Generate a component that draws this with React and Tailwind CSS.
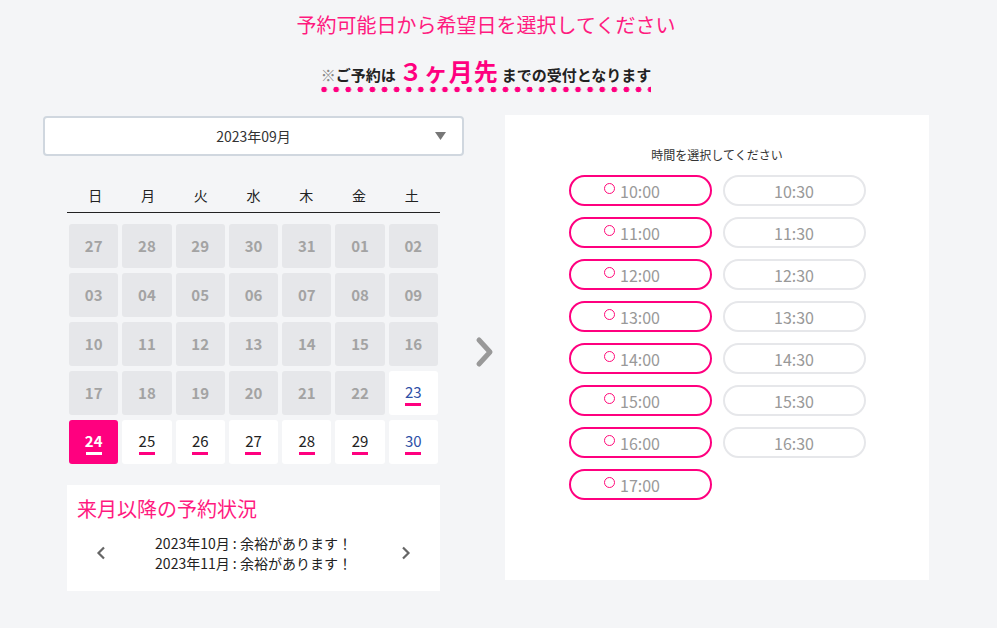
import React from "react";

const weeks = [
  ["27", "28", "29", "30", "31", "01", "02"],
  ["03", "04", "05", "06", "07", "08", "09"],
  ["10", "11", "12", "13", "14", "15", "16"],
  ["17", "18", "19", "20", "21", "22", "23"],
  ["24", "25", "26", "27", "28", "29", "30"],
];

const times = [
  ["10:00", "10:30"],
  ["11:00", "11:30"],
  ["12:00", "12:30"],
  ["13:00", "13:30"],
  ["14:00", "14:30"],
  ["15:00", "15:30"],
  ["16:00", "16:30"],
  ["17:00", null],
];

function DayCell({ day, row, col }) {
  // 9/23 以降が予約可能
  const open = row === 4 || (row === 3 && col === 6);
  const selected = row === 4 && col === 0;

  if (!open) {
    return (
      <div className="h-[44px] rounded-[3px] bg-[#e6e7ea] flex items-center justify-center text-[15px] font-bold text-[#a3a3a3]">
        {day}
      </div>
    );
  }
  if (selected) {
    return (
      <div className="h-[44px] rounded-[3px] bg-[#ff007f] flex flex-col items-center justify-center pt-[3px]">
        <span className="text-[15px] leading-[16px] font-bold text-white">{day}</span>
        <span className="mt-[3px] w-[16px] h-[3px] bg-white" />
      </div>
    );
  }
  return (
    <div className="h-[44px] rounded-[3px] bg-white flex flex-col items-center justify-center pt-[3px]">
      <span className={`text-[15px] leading-[16px] ${col === 6 ? "text-[#2d4fa6]" : "text-[#222]"}`}>{day}</span>
      <span className="mt-[3px] w-[16px] h-[3px] bg-[#ff007f]" />
    </div>
  );
}

function TimeButton({ time }) {
  if (!time) return <div />;
  const ok = time.endsWith(":00");
  return (
    <button
      className={`h-[31px] rounded-full border-2 flex items-center justify-center text-[16px] text-[#999] bg-white ${
        ok ? "border-[#ff007f]" : "border-[#e6e7ea]"
      }`}
    >
      <span className="relative">
        {ok && (
          <span className="absolute left-[-16px] top-[4px] w-[11px] h-[11px] rounded-full border-[1.5px] border-[#ff0a7a]" />
        )}
        {time}
      </span>
    </button>
  );
}

export default function App() {
  return (
    <div
      className="min-h-screen w-full bg-[#f4f5f7] text-[#222]"
      style={{ fontFamily: '"Noto Sans CJK JP", "Noto Sans", sans-serif' }}
    >
      <div className="ml-[43px] w-[886px]">
        <h1 className="pt-[11px] text-center text-[20px] leading-[28px] font-normal text-[#ff1a7f]">
          予約可能日から希望日を選択してください
        </h1>

        <div className="mt-[20px] flex justify-center">
          <div className="flex flex-col">
            <p className="flex items-baseline h-[24px] leading-[24px] font-bold text-[15px]">
              <span className="text-[#888]">※</span>
              <span>ご予約は</span>
              <span className="mx-[3px] text-[24px] text-[#ff007f] tracking-[1px]">３ヶ月先</span>
              <span>までの受付となります</span>
            </p>
            <div className="mt-[3px] h-[7px] w-full bg-[radial-gradient(circle,#ff007f_2.6px,transparent_3.1px)] bg-[length:12.1px_7px] bg-[position:-3px_0]" />
          </div>
        </div>

        <div className="mt-[22px] flex items-start">
          {/* 左カラム */}
          <div className="w-[421px]">
            <div className="mt-[1px] h-[40px] rounded-[4px] border-2 border-[#d0d7df] bg-white relative flex items-center justify-center text-[14px] text-[#333]">
              2023年09月
              <svg className="absolute right-[16px] top-[14px]" width="11" height="8" viewBox="0 0 11 8">
                <path d="M0 0 H11 L5.5 8 Z" fill="#777" />
              </svg>
            </div>

            <div className="ml-[24px] w-[373px] mt-[23px]">
              <div className="h-[34px] grid grid-cols-7 border-b border-[#222] px-[2px]">
                {["日", "月", "火", "水", "木", "金", "土"].map((d) => (
                  <div key={d} className="flex items-center justify-center text-[14px] text-[#222]">
                    {d}
                  </div>
                ))}
              </div>
              <div className="mt-[11px] grid grid-cols-7 gap-x-[4px] gap-y-[5px] px-[2px]">
                {weeks.map((w, r) =>
                  w.map((d, c) => <DayCell key={`${r}-${c}`} day={d} row={r} col={c} />)
                )}
              </div>

              <div className="mt-[21px] bg-white pt-[11px] pb-[18px]">
                <h2 className="pl-[10px] text-[20px] leading-[26px] text-[#ff1a7f] font-normal">来月以降の予約状況</h2>
                <div className="mt-[11px] flex items-center px-[29px]">
                  <svg width="10" height="14" viewBox="0 0 10 14">
                    <path d="M8 1.5 L2.5 7 L8 12.5" fill="none" stroke="#666" strokeWidth="2.2" />
                  </svg>
                  <div className="flex-1 text-center text-[14px] leading-[20px] text-[#222]">
                    <div>2023年10月 : 余裕があります！</div>
                    <div>2023年11月 : 余裕があります！</div>
                  </div>
                  <svg width="10" height="14" viewBox="0 0 10 14">
                    <path d="M2 1.5 L7.5 7 L2 12.5" fill="none" stroke="#666" strokeWidth="2.2" />
                  </svg>
                </div>
              </div>
            </div>
          </div>

          {/* 矢印 */}
          <div className="w-[41px] flex justify-center pt-[221px]">
            <svg width="22" height="32" viewBox="0 0 22 32">
              <path d="M5 4 L16 16 L5 28" fill="none" stroke="#999" strokeWidth="5" strokeLinecap="round" strokeLinejoin="round" />
            </svg>
          </div>

          {/* 時間選択 */}
          <div className="w-[424px] h-[465px] bg-white pt-[31px]">
            <p className="text-center text-[12px] leading-[18px] text-[#333]">時間を選択してください</p>
            <div className="mt-[11px] grid grid-cols-[143px_143px] justify-center gap-x-[11px] gap-y-[11px]">
              {times.map((row, i) =>
                row.map((t, j) => <TimeButton key={`${i}-${j}`} time={t} />)
              )}
            </div>
          </div>
        </div>
      </div>
    </div>
  );
}
